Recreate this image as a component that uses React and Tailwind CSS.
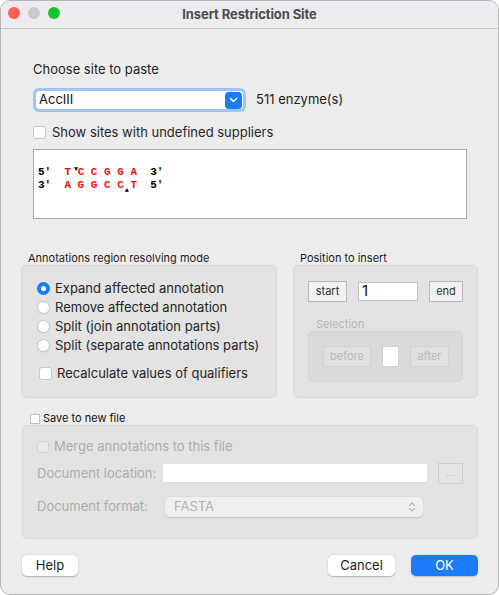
import React from 'react';

const font = { fontFamily: 'Inter, "Liberation Sans", Arial, sans-serif' };

const Radio = ({ checked, label }) => (
  <div className="flex items-center h-[19px]">
    {checked ? (
      <div className="w-[13px] h-[13px] rounded-full bg-[#1a7cf5] flex items-center justify-center">
        <div className="w-[5px] h-[5px] rounded-full bg-white" />
      </div>
    ) : (
      <div className="w-[13px] h-[13px] rounded-full bg-white border border-[#c6c6c6] shadow-[0_0.5px_1px_rgba(0,0,0,0.1)]" />
    )}
    <span className="ml-[5px] text-[13px] text-[#262626]">{label}</span>
  </div>
);

const GrayButton = ({ children, w, disabled }) => (
  <div
    className={`h-[21px] ${w} flex items-center justify-center text-[11px] border ${
      disabled ? 'border-[#d2d2d2] text-[#b8b8b8] bg-[#e0e0e0]' : 'border-[#b7b7b7] text-[#2e2e2e] bg-[#f2f2f2]'
    }`}
  >
    {children}
  </div>
);

const App = () => {
  return (
    <div className="w-[499px] h-[595px] bg-white" style={font}>
      <div className="w-full h-full rounded-[10px] border border-[#b4b4b4] bg-[#ececec] overflow-hidden flex flex-col">
        {/* title bar */}
        <div className="h-[28px] shrink-0 bg-[#edebf0] border-b border-[#c6c6c6] relative flex items-center justify-center">
          <div className="absolute left-[7px] top-[6px] flex gap-[8px]">
            <div className="w-[12px] h-[12px] rounded-full bg-[#fe5f57]" />
            <div className="w-[12px] h-[12px] rounded-full bg-[#c9c8cc]" />
            <div className="w-[12px] h-[12px] rounded-full bg-[#19c332]" />
          </div>
          <span className="text-[13px] font-bold text-[#4c4c4c] tracking-[-0.1px]">Insert Restriction Site</span>
        </div>

        {/* top section */}
        <div className="pl-[32px]">
          <div className="mt-[32px] h-[16px] leading-[16px] text-[13px] text-[#1e1e1e]">Choose site to paste</div>
          <div className="mt-[11px] flex items-center">
            <div className="w-[213px] h-[24px] rounded-[6px] bg-[#a2c4f2] p-[3px]">
              <div className="h-[18px] rounded-[4px] bg-white flex items-center justify-between pl-[3px] pr-[1px]">
                <span className="text-[13px] text-[#111]">AccIII</span>
                <div className="w-[17px] h-[17px] rounded-[4px] bg-[#1a7cf5] flex items-center justify-center">
                  <svg width="9" height="6" viewBox="0 0 9 6">
                    <path d="M1.5 1.5 L4.5 4.5 L7.5 1.5" fill="none" stroke="white" strokeWidth="1.6" strokeLinecap="round" strokeLinejoin="round" />
                  </svg>
                </div>
              </div>
            </div>
            <span className="ml-[10px] text-[13px] text-[#1e1e1e]">511 enzyme(s)</span>
          </div>
          <div className="mt-[14px] h-[13px] flex items-center">
            <div className="w-[13px] h-[13px] rounded-[3px] bg-white border border-[#c6c6c6]" />
            <span className="ml-[6px] text-[13px] text-[#262626]">Show sites with undefined suppliers</span>
          </div>
          <div
            className="mt-[10px] w-[434px] h-[70px] bg-white border border-[#a9a9a9] pt-[16px] pl-[4px] text-[11px] leading-[13px] font-bold whitespace-pre"
            style={{ fontFamily: '"Liberation Mono", "Courier New", monospace' }}
          >
            <div>
              <span className="text-black">5'  </span>
              <span className="text-[#f20d0d]">T</span>
              <span className="relative">
                {' '}
                <span className="absolute left-[3px] top-[-3px] text-[7px] text-black">▼</span>
              </span>
              <span className="text-[#f20d0d]">C C G G A</span>
              <span className="text-black">  3'</span>
            </div>
            <div>
              <span className="text-black">3'  </span>
              <span className="text-[#f20d0d]">A G G C C</span>
              <span className="relative">
                {' '}
                <span className="absolute left-[1px] top-[5px] text-[7px] text-black">▲</span>
              </span>
              <span className="text-[#f20d0d]">T</span>
              <span className="text-black">  5'</span>
            </div>
          </div>
        </div>

        {/* middle section */}
        <div className="px-[20px] mt-[33px] flex gap-[16px]">
          <div className="w-[256px]">
            <div className="h-[13px] leading-[13px] pl-[7px] text-[11px] text-[#1e1e1e]">Annotations region resolving mode</div>
            <div className="h-[133px] rounded-[5px] bg-[#e3e3e3] border border-[#d8d8d8] pt-[13px] pl-[15px]">
              <Radio checked label="Expand affected annotation" />
              <Radio label="Remove affected annotation" />
              <Radio label="Split (join annotation parts)" />
              <Radio label="Split (separate annotations parts)" />
              <div className="mt-[12px] ml-[2px] flex items-center h-[13px]">
                <div className="w-[13px] h-[13px] rounded-[3px] bg-white border border-[#c6c6c6]" />
                <span className="ml-[5px] text-[13px] text-[#262626]">Recalculate values of qualifiers</span>
              </div>
            </div>
          </div>
          <div className="w-[185px]">
            <div className="h-[13px] leading-[13px] pl-[7px] text-[11px] text-[#1e1e1e]">Position to insert</div>
            <div className="h-[133px] rounded-[5px] bg-[#e3e3e3] border border-[#d8d8d8] pt-[15px] pl-[14px]">
              <div className="flex items-center">
                <GrayButton w="w-[39px]">start</GrayButton>
                <div className="ml-[11px] w-[60px] h-[19px] bg-white border border-[#c3c3c3] flex items-center pl-[3px] text-[15px] text-[#111]">1</div>
                <div className="ml-[11px]">
                  <GrayButton w="w-[34px]">end</GrayButton>
                </div>
              </div>
              <div className="mt-[16px] h-[13px] leading-[13px] pl-[8px] text-[11px] text-[#b5b5b5]">Selection</div>
              <div className="w-[155px] h-[51px] rounded-[5px] bg-[#dadada] border border-[#d2d2d2] pt-[14px] pl-[14px] flex items-start">
                <GrayButton w="w-[48px]" disabled>before</GrayButton>
                <div className="ml-[11px] w-[17px] h-[21px] bg-white border border-[#d2d2d2]" />
                <div className="ml-[11px]">
                  <GrayButton w="w-[39px]" disabled>after</GrayButton>
                </div>
              </div>
            </div>
          </div>
        </div>

        {/* save section */}
        <div className="px-[20px]">
          <div className="mt-[14px] ml-[9px] h-[13px] flex items-center">
            <div className="w-[10px] h-[10px] bg-white border border-[#c3c3c3]" />
            <span className="ml-[3px] text-[11px] text-[#111]">Save to new file</span>
          </div>
          <div className="ml-px w-[456px] h-[114px] rounded-[5px] bg-[#e3e3e3] border border-[#d8d8d8] pt-[15px] pl-[14px] text-[13px] text-[#ababab]">
            <div className="flex items-center h-[12px]">
              <div className="w-[12px] h-[12px] rounded-[3px] bg-[#e9e9e9] border border-[#d3d3d3]" />
              <span className="ml-[5px]">Merge annotations to this file</span>
            </div>
            <div className="mt-[10px] flex items-center h-[21px]">
              <span className="w-[126px]">Document location:</span>
              <div className="w-[264px] h-[19px] bg-white border-b border-[#dcdcdc]" />
              <div className="ml-[11px] w-[25px] h-[21px] border border-[#cfcfcf] bg-[#e5e5e5] flex items-center justify-center text-[10px] text-[#b5b5b5] leading-none pb-[3px]">...</div>
            </div>
            <div className="mt-[13px] flex items-center h-[20px]">
              <span className="w-[128px]">Document format:</span>
              <div className="w-[258px] h-[20px] rounded-[5px] bg-[#efefef] shadow-[0_0.5px_1.5px_rgba(0,0,0,0.15)] flex items-center justify-between pl-[9px] pr-[7px]">
                <span className="text-[13px] text-[#b2b2b2]">FASTA</span>
                <svg width="8" height="12" viewBox="0 0 8 12">
                  <path d="M1.5 4.5 L4 2 L6.5 4.5 M1.5 7.5 L4 10 L6.5 7.5" fill="none" stroke="#b5b5b5" strokeWidth="1.2" strokeLinecap="round" strokeLinejoin="round" />
                </svg>
              </div>
            </div>
          </div>
        </div>

        {/* buttons */}
        <div className="px-[20px] mt-[16px] flex items-center">
          <div className="ml-px w-[56px] h-[21px] rounded-[5px] bg-white shadow-[0_0.5px_1.5px_rgba(0,0,0,0.25)] flex items-center justify-center text-[13px] text-[#1e1e1e]">Help</div>
          <div className="flex-1" />
          <div className="w-[67px] h-[21px] rounded-[5px] bg-white shadow-[0_0.5px_1.5px_rgba(0,0,0,0.25)] flex items-center justify-center text-[13px] text-[#1e1e1e]">Cancel</div>
          <div className="ml-[16px] w-[67px] h-[21px] rounded-[5px] bg-[#1a7cf8] shadow-[0_0.5px_1.5px_rgba(0,0,0,0.2)] flex items-center justify-center text-[13px] text-white">OK</div>
        </div>
      </div>
    </div>
  );
};

export default App;
